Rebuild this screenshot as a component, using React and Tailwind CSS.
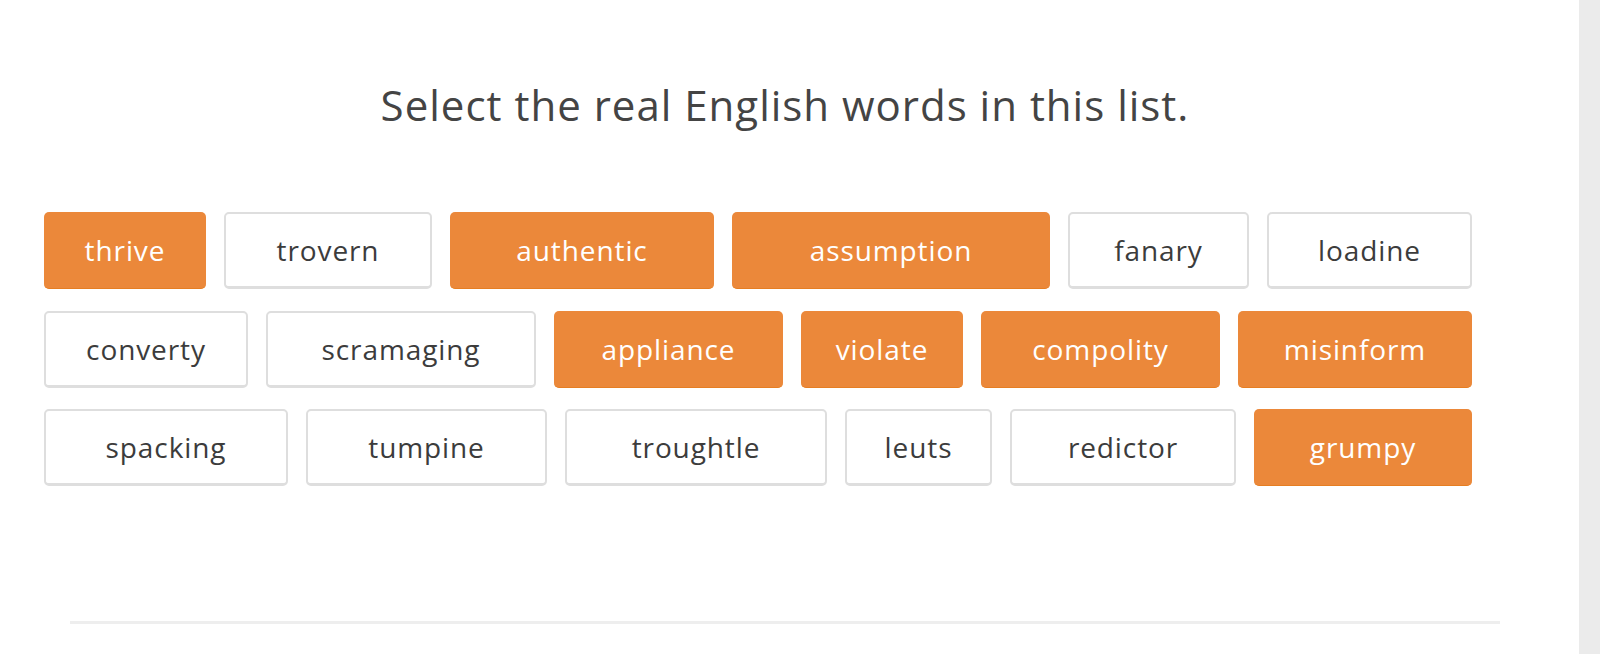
const rows = [
  [
    ["thrive", 162, true],
    ["trovern", 208, false],
    ["authentic", 264, true],
    ["assumption", 318, true],
    ["fanary", 181, false],
    ["loadine", 205, false],
  ],
  [
    ["converty", 204, false],
    ["scramaging", 270, false],
    ["appliance", 229, true],
    ["violate", 162, true],
    ["compolity", 239, true],
    ["misinform", 234, true],
  ],
  [
    ["spacking", 244, false],
    ["tumpine", 241, false],
    ["troughtle", 262, false],
    ["leuts", 147, false],
    ["redictor", 226, false],
    ["grumpy", 218, true],
  ],
];

function WordChip({ word, width, selected }) {
  return (
    <button
      style={{ width }}
      className={
        selected
          ? "h-[77px] shrink-0 flex items-center justify-center rounded-[5px] bg-[#eb883a] border-b border-[#e67e22] text-white text-[28px] tracking-[0.9px]"
          : "h-[77px] shrink-0 flex items-center justify-center rounded-[5px] bg-white border-[3px] border-t-2 border-x-[2.5px] border-[#dedede] text-[#3c3c3c] text-[28px] tracking-[0.9px]"
      }
    >
      {word}
    </button>
  );
}

export default function App() {
  return (
    <div
      className="w-[1600px] h-[654px] flex bg-white overflow-hidden [font-variant-ligatures:none]"
      style={{ fontFamily: "'Open Sans', Lato, sans-serif" }}
    >
      {/* main panel */}
      <div className="w-[1579px] h-full pl-[44px] pt-[79px]">
        <div className="w-[1482px]">
          <h1 className="text-center text-[42px] leading-[52px] tracking-[1px] text-[#444444] font-normal">
            Select the real English words in this list.
          </h1>

          <div className="mt-[81px] flex flex-col gap-[21.5px]">
            {rows.map((row, i) => (
              <div key={i} className="flex gap-[18px]">
                {row.map(([word, width, selected]) => (
                  <WordChip key={word} word={word} width={width} selected={selected} />
                ))}
              </div>
            ))}
          </div>

          <div className="mt-[135px] mx-[26px] h-[3px] bg-[#eeeeee]" />
        </div>
      </div>

      {/* scrollbar track */}
      <div className="w-[21px] h-full bg-[#ebebeb]" />
    </div>
  );
}
